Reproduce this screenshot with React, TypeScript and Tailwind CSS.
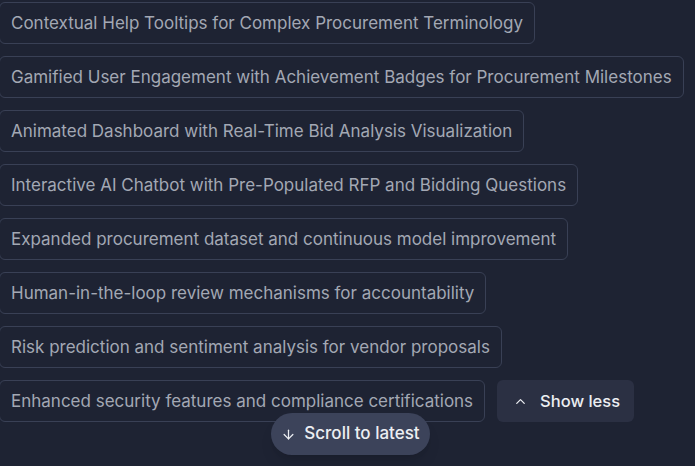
import React from 'react';
import { ArrowDown, ChevronUp } from 'lucide-react';

const features = [
  'Contextual Help Tooltips for Complex Procurement Terminology',
  'Gamified User Engagement with Achievement Badges for Procurement Milestones',
  'Animated Dashboard with Real-Time Bid Analysis Visualization',
  'Interactive AI Chatbot with Pre-Populated RFP and Bidding Questions',
  'Expanded procurement dataset and continuous model improvement',
  'Human-in-the-loop review mechanisms for accountability',
  'Risk prediction and sentiment analysis for vendor proposals',
];

const lastFeature = 'Enhanced security features and compliance certifications';

const Chip: React.FC<{ label: string }> = ({ label }) => (
  <div className="border border-[#394055] rounded-md px-[11px] py-2 text-[17px] leading-6 text-[#a3a8b4] whitespace-nowrap">
    {label}
  </div>
);

const App: React.FC = () => {
  return (
    <div
      className="relative w-[695px] h-[466px] overflow-hidden bg-[#1e2333]"
      style={{ fontFamily: 'Inter, "Noto Sans", sans-serif' }}
    >
      <div className="flex flex-col items-start gap-3 pt-[2px] -ml-px">
        {features.map((f) => (
          <Chip key={f} label={f} />
        ))}
        <div className="flex items-center gap-3">
          <Chip label={lastFeature} />
          <button className="flex items-center gap-3 h-[42px] pl-4 pr-[14px] rounded-md bg-[#2b3043] text-[#eceef2] text-[16.5px] font-medium">
            <ChevronUp size={15} strokeWidth={2} />
            <span>Show less</span>
          </button>
        </div>
      </div>

      <button className="absolute left-[271px] top-[413px] h-[42px] w-[159px] flex items-center justify-center gap-2 rounded-full bg-[#3c435a] text-[#eceef2] text-[17px] font-medium shadow-lg">
        <ArrowDown size={15} strokeWidth={2} />
        <span>Scroll to latest</span>
      </button>
    </div>
  );
};

export default App;
